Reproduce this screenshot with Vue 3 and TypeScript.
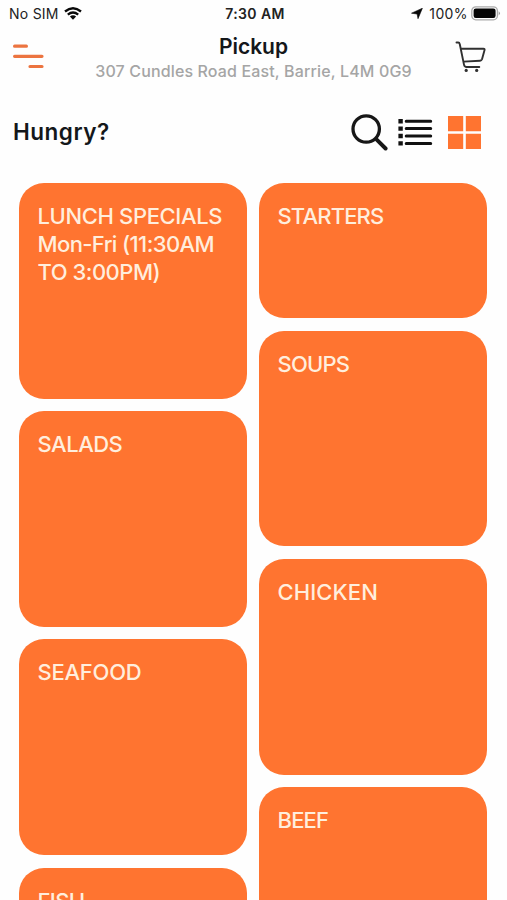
<script setup lang="ts">
interface Category {
  lines: string[]
  tracking: number[]
  short?: boolean
}

const columns: Category[][] = [
  [
    { lines: ['LUNCH SPECIALS', 'Mon-Fri (11:30AM', 'TO 3:00PM)'], tracking: [-0.36, -0.6, -0.5] },
    { lines: ['SALADS'], tracking: [-0.5] },
    { lines: ['SEAFOOD'], tracking: [-0.25] },
    { lines: ['FISH'], tracking: [-0.6] },
  ],
  [
    { lines: ['STARTERS'], tracking: [-0.85], short: true },
    { lines: ['SOUPS'], tracking: [-0.8] },
    { lines: ['CHICKEN'], tracking: [0.1] },
    { lines: ['BEEF'], tracking: [-0.8] },
  ],
]
</script>

<template>
  <main class="screen">
    <div class="status">
      <div class="carrier">
        <span class="sim">No SIM</span>
        <svg class="wifi" width="18" height="13" viewBox="0 0 18 13" fill="none" stroke="#080808" stroke-width="2.3">
          <path d="M1 4.5Q9-2 17 4.5M3.8 7.6Q9 3.4 14.2 7.6" />
          <path d="M5.9 9.4Q9 7 12.1 9.4L9 12.7Z" fill="#080808" stroke="none" />
        </svg>
      </div>
      <span class="time">7:30 AM</span>
      <div class="power">
        <svg width="12" height="11" viewBox="0 0 12 11"><path d="M11.4.2 7 10.7 6.1 6 .5 5.2Z" fill="#080808" stroke="#080808" stroke-width=".6" /></svg>
        <span class="percent">100%</span>
        <svg width="30" height="15" viewBox="0 0 30 15">
          <rect x=".8" y=".8" width="25.6" height="13" rx="4" fill="#fff" stroke="#aaa" stroke-width="1.3" />
          <rect x="2.6" y="2.6" width="22" height="9.4" rx="2.2" fill="#050505" />
          <path d="M27.7 5.2q2.4 2.1 0 4.2Z" fill="#999" />
        </svg>
      </div>
    </div>

    <header class="header">
      <button class="plain menu" aria-label="Menu">
        <svg width="32" height="26" viewBox="0 0 32 26" stroke="#ec7440" stroke-width="3.2" stroke-linecap="round">
          <path d="M2.6 2.2H14.4M2.6 12.3H30M18 22.5H30" />
        </svg>
      </button>
      <div class="place">
        <h1>Pickup</h1>
        <p>307 Cundles Road East, Barrie, L4M 0G9</p>
      </div>
      <button class="plain cart" aria-label="Cart">
        <svg width="32" height="32" viewBox="0 0 32 32" fill="none" stroke="#303030" stroke-width="1.9" stroke-linecap="round" stroke-linejoin="round">
          <path d="M1.5 1.5H3.2Q4.4 1.5 4.8 3.2L9 23.6Q9.5 26 11.5 26H24.3M5.9 7.7H28.4Q30 7.7 29.5 9.3L27 18.2Q26.5 19.6 25 19.7L8.4 20.6" />
          <circle cx="11.2" cy="29.4" r="1.6" fill="#303030" stroke="none" />
          <circle cx="21.7" cy="29.4" r="1.6" fill="#303030" stroke="none" />
        </svg>
      </button>
    </header>

    <section class="toolbar">
      <h2>Hungry?</h2>
      <div class="tools">
        <button class="plain" aria-label="Search">
          <svg width="37" height="37" viewBox="0 0 37 37" fill="none" stroke="#171717" stroke-linecap="round">
            <circle cx="15.2" cy="15" r="13.2" stroke-width="3.3" />
            <path d="M25.2 25.1 34.6 34.5" stroke-width="3.9" />
          </svg>
        </button>
        <button class="plain list" aria-label="List view">
          <svg width="35" height="28" viewBox="0 0 35 28" stroke="#111" fill="#111">
            <path d="M8.2 3.2H32.7M8.2 10.6H32.7M8.2 18H32.7M8.2 25.4H32.7" stroke-width="3" stroke-linecap="round" />
            <path d="M.4 1h4.4v4.4H.4zM.4 8.4h4.4v4.4H.4zM.4 15.8h4.4v4.4H.4zM.4 23.2h4.4v4.4H.4z" stroke="none" />
          </svg>
        </button>
        <button class="plain grid" aria-label="Grid view">
          <svg width="33" height="33" viewBox="0 0 33 33" fill="#ff7430">
            <path d="M0 0H15.2V15.2H0ZM17.8 0H33V15.2H17.8ZM0 17.8H15.2V33H0ZM17.8 17.8H33V33H17.8Z" />
          </svg>
        </button>
      </div>
    </section>

    <section class="categories">
      <div v-for="(column, c) in columns" :key="c" class="column">
        <article v-for="item in column" :key="item.lines[0]" class="card" :class="{ short: item.short }">
          <div v-for="(line, i) in item.lines" :key="line" :style="{ letterSpacing: item.tracking[i] + 'px' }">{{ line }}</div>
        </article>
      </div>
    </section>
  </main>
</template>

<style>
body {
  background: #fefefe;
  overflow: hidden;
}
</style>

<style scoped>
.screen {
  box-sizing: border-box;
  width: 507px;
  height: 900px;
  overflow: hidden;
  background: #fefefe;
  color: #14171a;
  font-family: Inter, "Liberation Sans", sans-serif;
}
.status {
  display: grid;
  grid-template-columns: 1fr auto 1fr;
  align-items: center;
  height: 27px;
  padding: 0 6px 0 9px;
  font-size: 14px;
  color: #222;
}
.carrier,
.power {
  display: flex;
  align-items: center;
}
.sim { letter-spacing: 0.25px; }
.wifi { margin-left: 5.5px; }
.time {
  font-weight: 600;
  letter-spacing: 0.4px;
}
.power { justify-content: flex-end; }
.percent {
  margin: 0 3px 0 6px;
  letter-spacing: 0.4px;
}
.header {
  display: grid;
  grid-template-columns: 48px 1fr 48px;
  height: 63px;
}
.plain {
  display: block;
  padding: 0;
  border: 0;
  background: none;
}
.plain svg { display: block; }
.menu {
  padding: 17px 0 0 12px;
  align-self: start;
}
.cart {
  padding-top: 14px;
  align-self: start;
  justify-self: start;
  margin-left: -4px;
}
.place { text-align: center; }
h1, h2, p { margin: 0; }
h1 {
  padding-top: 7px;
  font-size: 21px;
  line-height: 26px;
  font-weight: 600;
}
p {
  padding-top: 1px;
  font-size: 16px;
  line-height: 20px;
  font-weight: 500;
  letter-spacing: 0.14px;
  color: #a5a5a5;
  white-space: nowrap;
}
.toolbar {
  display: flex;
  justify-content: space-between;
  height: 93.3px;
  padding: 0 26px 0 13px;
}
h2 {
  padding-top: 27px;
  font-size: 22.5px;
  line-height: 30px;
  font-weight: 600;
  letter-spacing: 0.5px;
}
.tools {
  display: flex;
  align-items: flex-start;
  padding-top: 24px;
}
.list { margin: 4px 0 0 10px; }
.grid { margin: 2px 0 0 15px; }
.categories {
  display: flex;
  gap: 12px;
  padding-left: 19px;
}
.column {
  display: flex;
  flex-direction: column;
  gap: 12.3px;
  width: 228px;
}
.card {
  box-sizing: border-box;
  flex: none;
  height: 215.8px;
  padding: 19px 0 0 18.5px;
  border-radius: 25px;
  background: #ff7430;
  color: #ffeedd;
  font-size: 22px;
  line-height: 28px;
  font-weight: 500;
  white-space: nowrap;
}
.short { height: 135.1px; }
</style>
